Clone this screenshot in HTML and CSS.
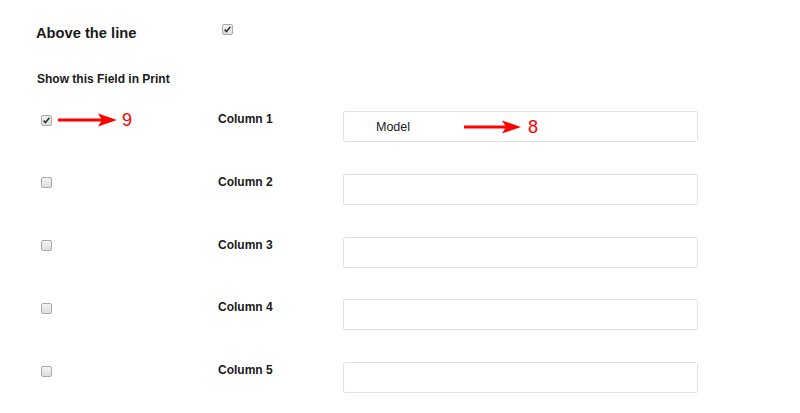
FILE: index.html
```
<!DOCTYPE html>
<html>
<head>
<meta charset="utf-8">
<link rel="stylesheet" href="styles.css">
</head>
<body>
<div class="page">
  <div class="head">
    <span class="title">Above the line</span>
    <span class="cb checked"><svg viewBox="0 0 11 11" width="11" height="11"><path d="M2.6 5.6 L4.5 7.6 L8.4 2.8" fill="none" stroke="#333" stroke-width="1.6"/></svg></span>
  </div>
  <div class="subtitle">Show this Field in Print</div>
  <div class="rows">
    <div class="row">
      <div class="check">
        <span class="cb checked"><svg viewBox="0 0 11 11" width="11" height="11"><path d="M2.6 5.6 L4.5 7.6 L8.4 2.8" fill="none" stroke="#333" stroke-width="1.6"/></svg></span>
        <svg class="arrow a9" viewBox="0 0 59 14" width="59" height="14"><rect x="0" y="5.5" width="46" height="3" fill="#f00"/><polygon points="40,0.5 59,7 40,13.5 44,7" fill="#f00"/></svg>
        <span class="num">9</span>
      </div>
      <div class="label">Column 1</div>
      <div class="field">
        <span class="value">Model</span>
        <svg class="arrow a8" viewBox="0 0 57 14" width="57" height="14"><rect x="0" y="5.5" width="44" height="3" fill="#f00"/><polygon points="38,0.5 57,7 38,13.5 42,7" fill="#f00"/></svg>
        <span class="num">8</span>
      </div>
    </div>
    <div class="row">
      <div class="check"><span class="cb"></span></div>
      <div class="label">Column 2</div>
      <div class="field"></div>
    </div>
    <div class="row">
      <div class="check"><span class="cb"></span></div>
      <div class="label">Column 3</div>
      <div class="field"></div>
    </div>
    <div class="row">
      <div class="check"><span class="cb"></span></div>
      <div class="label">Column 4</div>
      <div class="field"></div>
    </div>
    <div class="row">
      <div class="check"><span class="cb"></span></div>
      <div class="label">Column 5</div>
      <div class="field"></div>
    </div>
  </div>
</div>
</body>
</html>
```
FILE: styles.css
```
html, body {
  margin: 0;
  padding: 0;
  background: #fff;
}
body {
  font-family: "Liberation Sans", Arial, sans-serif;
  color: #1a1a1a;
}
.page {
  padding: 23px 0 0 36px;
}
.head {
  display: flex;
  align-items: flex-start;
  height: 18px;
}
.title {
  width: 186px;
  font-size: 14.7px;
  line-height: 18px;
  font-weight: bold;
  padding-top: 1px;
}
.head .cb {
  margin-top: 1px;
}
.subtitle {
  margin-top: 31px;
  margin-left: 1px;
  font-size: 12px;
  line-height: 14px;
  font-weight: bold;
}
.rows {
  margin-top: 25px;
  display: flex;
  flex-direction: column;
  gap: 31.75px;
}
.row {
  display: grid;
  grid-template-columns: 182px 125px 355px;
  height: 31px;
}
.check {
  display: flex;
  align-items: center;
  height: 18px;
  padding-left: 5px;
}
.cb {
  display: inline-block;
  box-sizing: border-box;
  width: 11px;
  height: 11px;
  border: 1px solid #a9a9a9;
  border-radius: 2px;
  background: linear-gradient(#f4f4f4, #dedede);
  flex: none;
  position: relative;
}
.cb svg {
  position: absolute;
  left: -1px;
  top: -1px;
}
.arrow {
  flex: none;
  display: block;
}
.a9 {
  margin-left: 6px;
}
.num {
  color: #f00;
  font-size: 18px;
  line-height: 18px;
  margin-left: 5px;
}
.label {
  font-size: 12px;
  line-height: 14px;
  font-weight: bold;
  padding-top: 1px;
}
.field {
  box-sizing: border-box;
  height: 31px;
  border: 1px solid #e2e2e2;
  border-radius: 2px;
  display: flex;
  align-items: center;
  padding-left: 32px;
}
.value {
  font-size: 12.5px;
  width: 88px;
  flex: none;
}
.a8 {
  margin-left: 0;
}
.field .num {
  margin-left: 7px;
}
```
